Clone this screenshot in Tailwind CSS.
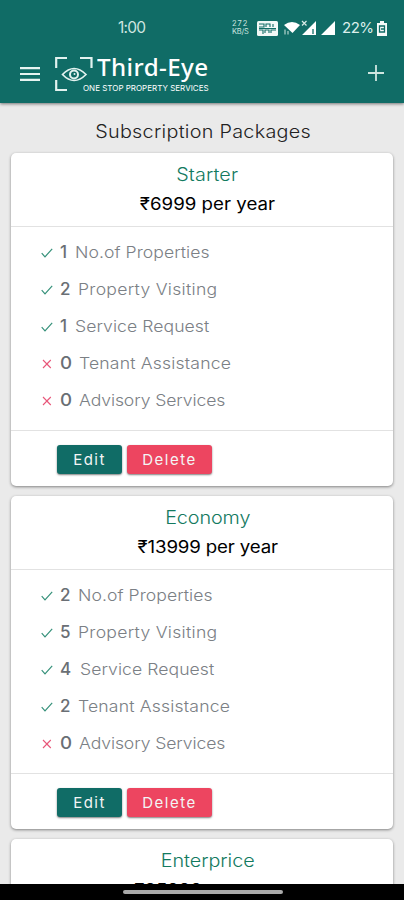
<!DOCTYPE html>
<html lang="en">
<head>
<meta charset="utf-8">
<title>Subscription Packages</title>
<script src="https://cdn.jsdelivr.net/npm/@tailwindcss/browser@4"></script>
</head>
<body class="w-[404px] h-[900px] overflow-hidden bg-[#eaeaea] font-[Inter,sans-serif]">
<svg class="hidden">
  <symbol id="check" viewBox="0 0 12 12"><path d="M.7 6.2 4 9.8 11.2 1.9" fill="none" stroke="#35917a" stroke-width="1.2"/></symbol>
  <symbol id="cross" viewBox="0 0 12 12"><path d="M2 2 9.8 10M9.8 2 2 10" fill="none" stroke="#e8577a" stroke-width="1.1"/></symbol>
</svg>
<div class="flex flex-col h-[900px]">
  <header class="h-[103px] shrink-0 bg-[#106c66] text-white shadow-[0_1px_3px_rgba(0,0,0,0.5)] relative">
    <div class="h-[50px] pt-[6px] flex items-center">
      <span class="ml-[118px] w-[28px] text-[15.5px] tracking-[-0.8px] text-[#cfe6e0]">1:00</span>
      <span class="ml-[86px] w-[17px] text-[7.5px] leading-[8px] text-[#cfe6e0]"><span class="block tracking-[1px]">272</span><span class="block tracking-[-0.2px]">KB/S</span></span>
      <svg class="ml-[8px] w-[21px] h-[15px]" viewBox="0 0 21 15"><rect width="21" height="15" rx="1.5" fill="#f1f8f6"/><path d="M2 3h5v3H2M9 6V3h4v3M16 3v3M2 9h4v4M8 12V9h4v3M14 12V9h5M2 7.5h17" fill="none" stroke="#106c66" stroke-width="1.1"/></svg>
      <svg class="ml-[6px] w-[51px] h-[16px]" viewBox="0 0 51 16"><path d="M0 5Q8-1 16 5L8.500 13Z" fill="#fff"/><path d="M1 9.500v5M4 11v3.500" stroke="#a8cdc6" stroke-width="1.3"/><path d="m18 1 4.500 4.500m0-4.500-4.500 4.500" stroke="#d9ece8" stroke-width="1.2"/><path d="M18 15 32 1v14ZM37 15 51 1v14Z" fill="#fff"/><path d="M29 9v5" stroke="#106c66" stroke-width="1.3"/></svg>
      <span class="ml-[7px] w-[32px] text-[15px] tracking-[-0.5px] text-[#dcefeb]">22%</span>
      <svg class="ml-[3px] w-[10px] h-[15px]" viewBox="0 0 10 15"><path d="M3 0h4v2h3v13H0V2h3Z" fill="#f5faf9"/><path d="M2.500 5h5v6h-5zM4 8h3" fill="none" stroke="#106c66" stroke-width="1.3"/></svg>
    </div>
    <div class="flex items-start h-[50px] pl-[20px]">
      <svg class="mt-[17px] w-[20px] h-[14px]" viewBox="0 0 20 14"><path d="M0 1.200h20M0 7h20M0 12.800h20" stroke="#e6f4f1" stroke-width="2.200"/></svg>
      <svg class="ml-[15px] mt-[6px] w-[38px] h-[36px]" viewBox="0 0 38 36" fill="none" stroke="#e2f2ef"><path d="M1.200 12V2H12M25 2h11.500v10M1.200 24v10H12" stroke-width="2.200"/><path d="M7.500 18.500Q19 6.500 31 18.500Q19 30.500 7.500 18.500Z" stroke-width="1.700"/><circle cx="19" cy="18.500" r="4" stroke-width="2"/><circle cx="19.500" cy="18" r="1" fill="#e2f2ef" stroke="none"/></svg>
      <div class="relative w-[120px] h-[45px]">
        <span class="absolute left-[4px] top-[2px] text-[23px] leading-[30px] whitespace-nowrap font-medium tracking-[0.4px] origin-left scale-x-[1.05] font-['Noto_Sans',sans-serif]">Third-Eye</span>
        <span class="absolute left-[-10px] top-[32px] text-[8px] leading-[12px] whitespace-nowrap">ONE STOP PROPERTY SERVICES</span>
      </div>
      <svg class="ml-[155px] mt-[15px] w-[16px] h-[16px]" viewBox="0 0 16 16"><path d="M8 0v16M0 8h16" stroke="#cfe6e0" stroke-width="1.800"/></svg>
    </div>
  </header>
  <main class="flex-1 overflow-hidden px-[11px] text-center">
    <h1 class="h-[50px] pt-[15px] pl-[2px] text-[18px] leading-[28px] font-light text-[#222] whitespace-nowrap"><span class="inline-block scale-x-110 tracking-[0.25px]">Subscription Packages</span></h1>

    <section class="h-[333px] mb-[10px] rounded-[5px] bg-white shadow-[0_1px_3px_rgba(0,0,0,0.45)]">
      <div class="h-[74px] border-b border-[#e2e2e2] pt-[8px] pl-[11px]">
        <h2 class="text-[18px] leading-[28px] font-light text-[#137a5f]"><span class="inline-block scale-x-110 tracking-[0.1px]">Starter</span></h2>
        <p class="text-[17px] leading-[30px] text-black"><span class="inline-block scale-x-110">₹6999 per year</span></p>
      </div>
      <ul class="h-[204px] border-b border-[#e2e2e2] pt-[7px] pl-[30px] text-[16px] text-[#7b8085]">
        <li class="h-[37px] flex items-center"><svg class="w-[12px] h-[12px] mr-[7px]"><use href="#check"/></svg><b class="w-[15px] text-left font-medium text-[17px] text-[#6a6f75]">1</b><span class="pb-[2px] font-light origin-left scale-x-110 tracking-[0.05px]">No.of Properties</span></li>
        <li class="h-[37px] flex items-center"><svg class="w-[12px] h-[12px] mr-[7px]"><use href="#check"/></svg><b class="w-[18px] text-left font-medium text-[17px] text-[#6a6f75]">2</b><span class="pb-[2px] font-light origin-left scale-x-110 tracking-[0.25px]">Property Visiting</span></li>
        <li class="h-[37px] flex items-center"><svg class="w-[12px] h-[12px] mr-[7px]"><use href="#check"/></svg><b class="w-[15px] text-left font-medium text-[17px] text-[#6a6f75]">1</b><span class="pb-[2px] font-light origin-left scale-x-110 tracking-[0.05px]">Service Request</span></li>
        <li class="h-[37px] flex items-center"><svg class="w-[12px] h-[12px] mr-[7px]"><use href="#cross"/></svg><b class="w-[19px] text-left font-medium text-[17px] text-[#6a6f75]"><span class="inline-block origin-left scale-x-110">0</span></b><span class="pb-[2px] font-light origin-left scale-x-110 tracking-[0.15px]">Tenant Assistance</span></li>
        <li class="h-[37px] flex items-center"><svg class="w-[12px] h-[12px] mr-[7px]"><use href="#cross"/></svg><b class="w-[19px] text-left font-medium text-[17px] text-[#6a6f75]"><span class="inline-block origin-left scale-x-110">0</span></b><span class="pb-[2px] font-light origin-left scale-x-110 tracking-[-0.1px]">Advisory Services</span></li>
      </ul>
      <div class="flex gap-[5px] pt-[14px] pl-[46px] text-[15px] text-[#f3f5f5]">
        <button class="w-[65px] h-[29px] pt-px rounded-[3px] bg-[#106c66] shadow-[0_1px_2px_rgba(0,0,0,0.5)] tracking-[1.500px]">Edit</button>
        <button class="w-[85px] h-[29px] pt-px rounded-[3px] bg-[#ed4560] shadow-[0_1px_2px_rgba(0,0,0,0.5)] tracking-[1.500px]">Delete</button>
      </div>
    </section>

    <section class="h-[333px] mb-[10px] rounded-[5px] bg-white shadow-[0_1px_3px_rgba(0,0,0,0.45)]">
      <div class="h-[74px] border-b border-[#e2e2e2] pt-[8px] pl-[12px]">
        <h2 class="text-[18px] leading-[28px] font-light text-[#137a5f]"><span class="inline-block scale-x-110 tracking-[-0.1px]">Economy</span></h2>
        <p class="text-[17px] leading-[30px] text-black"><span class="inline-block scale-x-110 tracking-[-0.15px]">₹13999 per year</span></p>
      </div>
      <ul class="h-[204px] border-b border-[#e2e2e2] pt-[7px] pl-[30px] text-[16px] text-[#7b8085]">
        <li class="h-[37px] flex items-center"><svg class="w-[12px] h-[12px] mr-[7px]"><use href="#check"/></svg><b class="w-[18px] text-left font-medium text-[17px] text-[#6a6f75]">2</b><span class="pb-[2px] font-light origin-left scale-x-110 tracking-[0.05px]">No.of Properties</span></li>
        <li class="h-[37px] flex items-center"><svg class="w-[12px] h-[12px] mr-[7px]"><use href="#check"/></svg><b class="w-[18px] text-left font-medium text-[17px] text-[#6a6f75]">5</b><span class="pb-[2px] font-light origin-left scale-x-110 tracking-[0.25px]">Property Visiting</span></li>
        <li class="h-[37px] flex items-center"><svg class="w-[12px] h-[12px] mr-[7px]"><use href="#check"/></svg><b class="w-[20px] text-left font-medium text-[17px] text-[#6a6f75]">4</b><span class="pb-[2px] font-light origin-left scale-x-110 tracking-[0.05px]">Service Request</span></li>
        <li class="h-[37px] flex items-center"><svg class="w-[12px] h-[12px] mr-[7px]"><use href="#check"/></svg><b class="w-[18px] text-left font-medium text-[17px] text-[#6a6f75]">2</b><span class="pb-[2px] font-light origin-left scale-x-110 tracking-[0.15px]">Tenant Assistance</span></li>
        <li class="h-[37px] flex items-center"><svg class="w-[12px] h-[12px] mr-[7px]"><use href="#cross"/></svg><b class="w-[19px] text-left font-medium text-[17px] text-[#6a6f75]"><span class="inline-block origin-left scale-x-110">0</span></b><span class="pb-[2px] font-light origin-left scale-x-110 tracking-[-0.1px]">Advisory Services</span></li>
      </ul>
      <div class="flex gap-[5px] pt-[14px] pl-[46px] text-[15px] text-[#f3f5f5]">
        <button class="w-[65px] h-[29px] pt-px rounded-[3px] bg-[#106c66] shadow-[0_1px_2px_rgba(0,0,0,0.5)] tracking-[1.500px]">Edit</button>
        <button class="w-[85px] h-[29px] pt-px rounded-[3px] bg-[#ed4560] shadow-[0_1px_2px_rgba(0,0,0,0.5)] tracking-[1.500px]">Delete</button>
      </div>
    </section>

    <section class="h-[333px] rounded-[5px] bg-white shadow-[0_1px_3px_rgba(0,0,0,0.45)]">
      <div class="h-[74px] border-b border-[#e2e2e2] pt-[8px] pl-[11px]">
        <h2 class="text-[18px] leading-[28px] font-light text-[#137a5f]"><span class="inline-block scale-x-110 tracking-[-0.05px]">Enterprice</span></h2>
        <p class="text-[17px] leading-[30px] text-black"><span class="inline-block scale-x-110">₹25999 per year</span></p>
      </div>
    </section>
  </main>
  <footer class="h-[16px] shrink-0 bg-black flex justify-center pt-[6px] pl-[2px]"><div class="w-[160px] h-[4px] rounded-full bg-[#aaa]"></div></footer>
</div>
</body>
</html>
